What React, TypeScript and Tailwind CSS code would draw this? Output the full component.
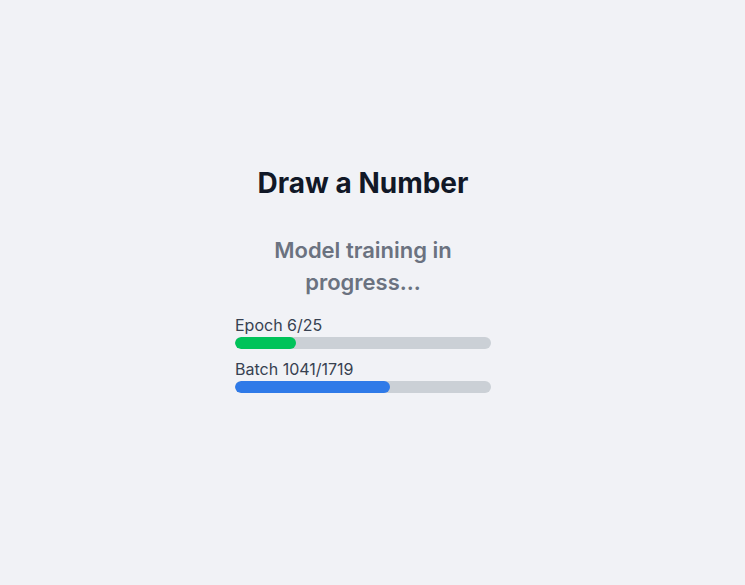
export default function App() {
  const epoch = 6;
  const epochs = 25;
  const batch = 1041;
  const batches = 1719;

  return (
    <div
      className="min-h-screen bg-[#f1f2f6] flex flex-col items-center justify-center pb-[25px] pr-[19px]"
      style={{ fontFamily: "Inter, 'Noto Sans', sans-serif" }}
    >
      <h1 className="text-[28px] leading-8 font-bold text-[#111827]">Draw a Number</h1>
      <div className="w-64 mt-[35px]">
        <p className="text-[22px] leading-8 font-semibold text-[#6b7280] text-center">
          Model training in progress...
        </p>
        <div className="mt-[15px] space-y-2">
          <div>
            <div className="text-base leading-6 text-[#374151]">Epoch {epoch}/{epochs}</div>
            <div className="h-3 w-full rounded-full bg-[#cbd0d6] overflow-hidden">
              <div className="h-full rounded-full bg-[#00c35a]" style={{ width: `${(epoch / epochs) * 100}%` }} />
            </div>
          </div>
          <div>
            <div className="text-base leading-6 text-[#374151]">Batch {batch}/{batches}</div>
            <div className="h-3 w-full rounded-full bg-[#cbd0d6] overflow-hidden">
              <div className="h-full rounded-full bg-[#2f7ae8]" style={{ width: `${(batch / batches) * 100}%` }} />
            </div>
          </div>
        </div>
      </div>
    </div>
  );
}
